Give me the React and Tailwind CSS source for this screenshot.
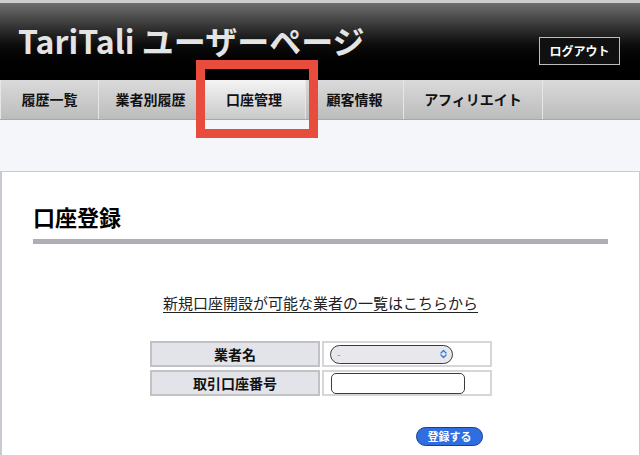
const navItems = [
  { label: "履歴一覧", w: "w-[98px]" },
  { label: "業者別履歴", w: "w-[104px]" },
  { label: "口座管理", w: "w-[103px]", active: true },
  { label: "顧客情報", w: "w-[98px]" },
  { label: "アフィリエイト", w: "w-[139px]" },
];

function SelectArrows() {
  return (
    <svg width="9" height="10" viewBox="0 0 9 10" fill="none">
      <path d="M2 4 L4.5 1.5 L7 4" stroke="#3a78dc" strokeWidth="1.4" strokeLinecap="round" strokeLinejoin="round" />
      <path d="M2 6 L4.5 8.5 L7 6" stroke="#3a78dc" strokeWidth="1.4" strokeLinecap="round" strokeLinejoin="round" />
    </svg>
  );
}

export default function App() {
  return (
    <div
      className="relative w-[640px] h-[455px] overflow-hidden bg-white"
      style={{ fontFamily: '"Noto Sans CJK JP", "Noto Sans", sans-serif' }}
    >
      {/* header */}
      <div className="h-[3px] bg-[#cfcfcf]" />
      <div className="h-[77px] flex justify-between bg-gradient-to-b from-[#707070] via-[#0c0c0c] via-55% to-black">
        <h1 className="ml-[18px] mt-[21px] text-[32px] leading-none font-bold text-[#e4e4e4]">
          TariTali ユーザーページ
        </h1>
        <button className="mt-[34px] mr-[20px] h-[28px] w-[81px] border border-[#bdbdbd] bg-[#101010] text-[12px] font-bold text-white">
          ログアウト
        </button>
      </div>

      {/* nav */}
      <div className="h-[40px] flex bg-gradient-to-b from-[#dadada] to-[#bcbcbc] border-b border-[#a9a9a9]">
        {navItems.map((item) => (
          <div
            key={item.label}
            className={`${item.w} flex items-center justify-center border-l border-[#e6e6e6] text-[14px] font-bold text-[#111] ${
              item.active ? "bg-gradient-to-b from-[#f4f4f4] to-[#c9c9c9]" : ""
            }`}
          >
            {item.label}
          </div>
        ))}
        <div className="flex-1 border-l border-[#e6e6e6]" />
      </div>

      <div className="h-[51px] bg-[#f5f6fa]" />

      {/* content panel */}
      <div className="h-[300px] border-t border-r border-l-2 border-[#c9c9d1]">
        <h2 className="ml-[31px] mt-[33px] text-[22px] leading-none font-bold text-black">口座登録</h2>
        <div className="mx-[31px] mt-[12px] h-[5px] bg-[#aeafb5]" />

        <p className="mt-[51px] text-center text-[15px] leading-none text-[#222] underline underline-offset-[3px]">
          新規口座開設が可能な業者の一覧はこちらから
        </p>

        <div className="mt-[31px] ml-[148px] grid grid-cols-[170px_170px] gap-x-[2px] gap-y-[3px]">
          <div className="h-[26px] flex items-center justify-center border-2 border-[#c2c2c6] bg-[#e3e4e9] text-[14px] font-bold text-[#111]">
            業者名
          </div>
          <div className="h-[26px] flex items-center border-2 border-[#d6d6d9] pl-[6px]">
            <div className="w-[123px] h-[19px] flex items-center justify-between rounded-full border border-[#3a3a3a] bg-[#e8e8ec] pl-[6px] pr-[4px]">
              <span className="text-[10px] leading-none text-[#6b8fc7]">-</span>
              <SelectArrows />
            </div>
          </div>
          <div className="h-[26px] flex items-center justify-center border-2 border-[#c2c2c6] bg-[#e3e4e9] text-[14px] font-bold text-[#111]">
            取引口座番号
          </div>
          <div className="h-[26px] flex items-center border-2 border-[#d6d6d9] pl-[7px]">
            <div className="w-[134px] h-[21px] rounded-[5px] border-[1.5px] border-[#3c3c3c] bg-white" />
          </div>
        </div>

        <div className="mt-[26px] ml-[414px]">
          <button className="w-[67px] h-[19px] rounded-full border border-[#1d3f8a] bg-[#2e6ee0] text-[11px] leading-none font-bold text-white">
            登録する
          </button>
        </div>
      </div>

      {/* annotation box */}
      <div className="absolute left-[196px] top-[60px] w-[122px] h-[78px] border-[9px] border-[#e74c3c]" />
    </div>
  );
}
